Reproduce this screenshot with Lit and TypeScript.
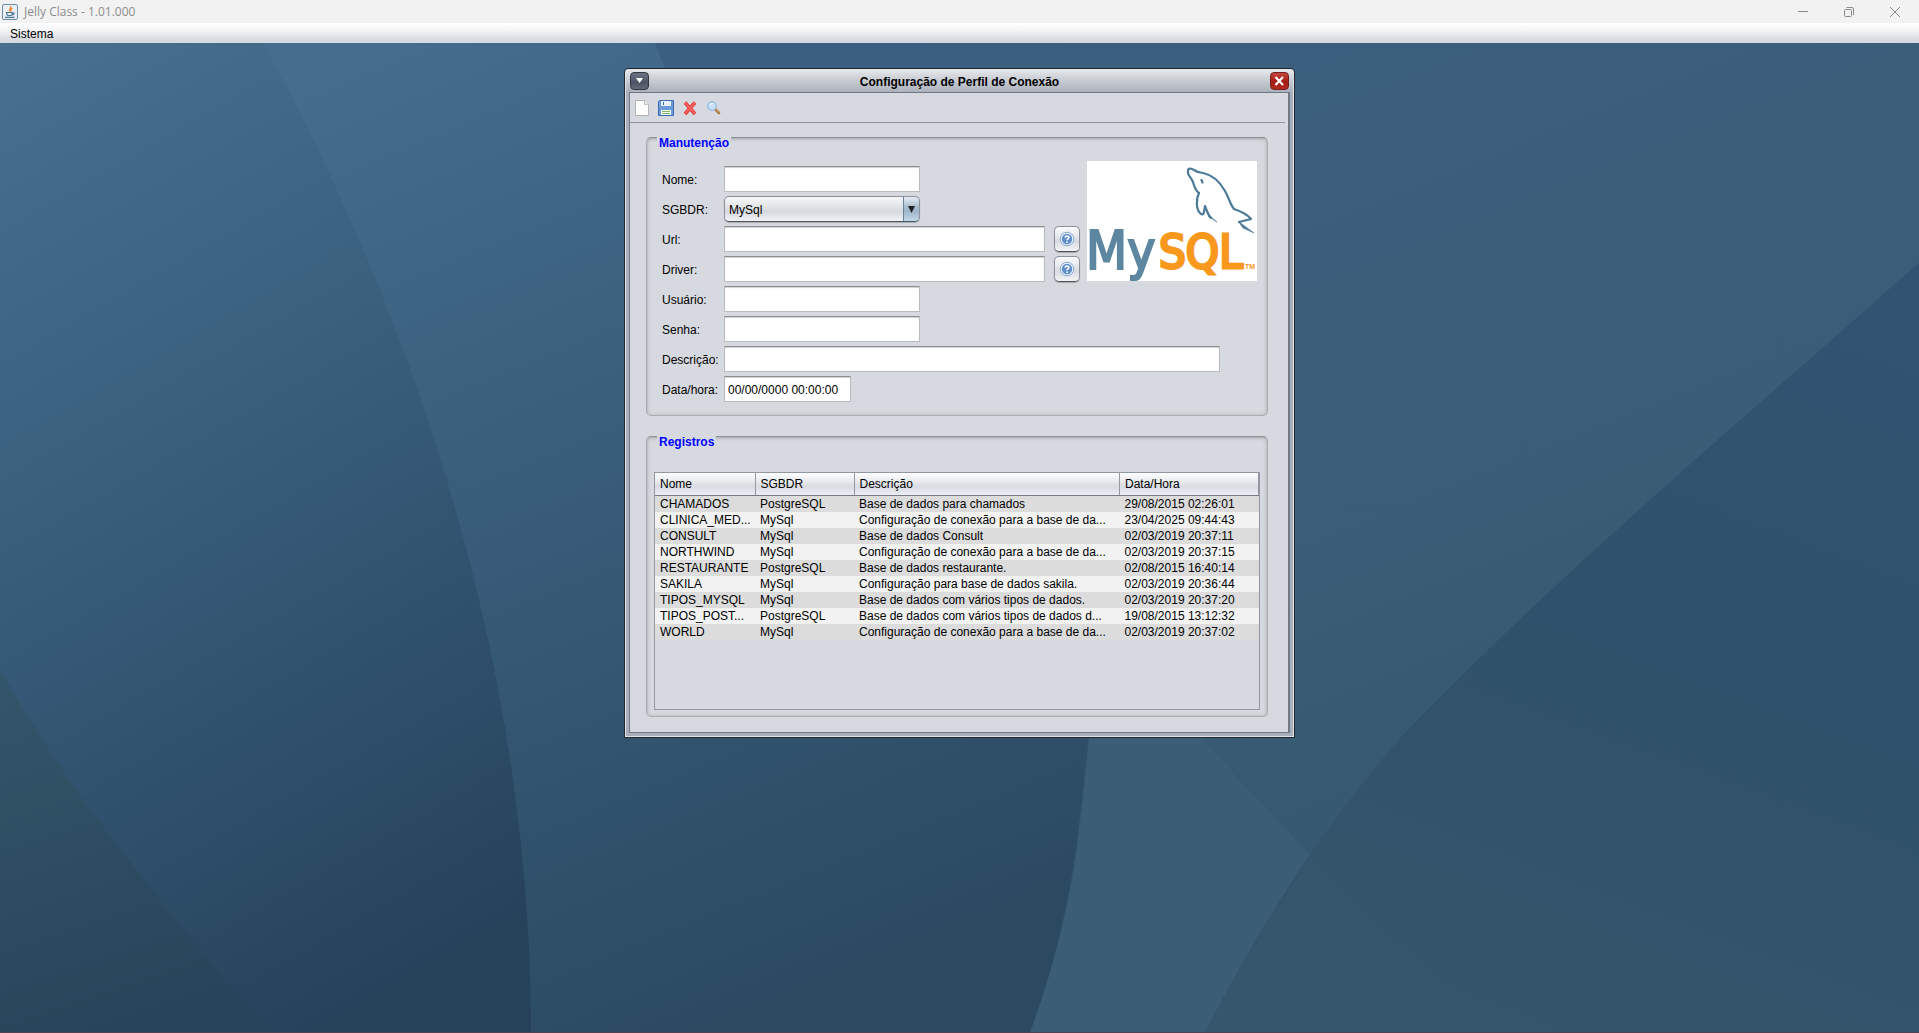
import { LitElement, html, css, svg } from "lit";
import { customElement } from "lit/decorators.js";

interface Registro {
  nome: string;
  sgbdr: string;
  descricao: string;
  data: string;
}

const registros: Registro[] = [
  { nome: "CHAMADOS", sgbdr: "PostgreSQL", descricao: "Base de dados para chamados", data: "29/08/2015 02:26:01" },
  { nome: "CLINICA_MED...", sgbdr: "MySql", descricao: "Configuração de conexão para a base de da...", data: "23/04/2025 09:44:43" },
  { nome: "CONSULT", sgbdr: "MySql", descricao: "Base de dados Consult", data: "02/03/2019 20:37:11" },
  { nome: "NORTHWIND", sgbdr: "MySql", descricao: "Configuração de conexão para a base de da...", data: "02/03/2019 20:37:15" },
  { nome: "RESTAURANTE", sgbdr: "PostgreSQL", descricao: "Base de dados restaurante.", data: "02/08/2015 16:40:14" },
  { nome: "SAKILA", sgbdr: "MySql", descricao: "Configuração para base de dados sakila.", data: "02/03/2019 20:36:44" },
  { nome: "TIPOS_MYSQL", sgbdr: "MySql", descricao: "Base de dados com vários tipos de dados.", data: "02/03/2019 20:37:20" },
  { nome: "TIPOS_POST...", sgbdr: "PostgreSQL", descricao: "Base de dados com vários tipos de dados d...", data: "19/08/2015 13:12:32" },
  { nome: "WORLD", sgbdr: "MySql", descricao: "Configuração de conexão para a base de da...", data: "02/03/2019 20:37:02" },
];

const wallpaper = svg`
  <defs>
    <linearGradient id="left" gradientUnits="userSpaceOnUse" x1="0" y1="0" x2="520" y2="900">
      <stop offset="0" stop-color="#48718f"/><stop offset=".45" stop-color="#375d7b"/><stop offset="1" stop-color="#26415a"/>
    </linearGradient>
    <linearGradient id="corner" gradientUnits="userSpaceOnUse" x1="0" y1="630" x2="120" y2="990">
      <stop offset="0" stop-color="#34566a"/><stop offset="1" stop-color="#28445a"/>
    </linearGradient>
    <linearGradient id="mid" gradientUnits="userSpaceOnUse" x1="350" y1="0" x2="760" y2="990">
      <stop offset="0" stop-color="#456d8e"/><stop offset=".5" stop-color="#375b78"/><stop offset="1" stop-color="#2b4961"/>
    </linearGradient>
    <linearGradient id="base" gradientUnits="userSpaceOnUse" x1="900" y1="0" x2="1300" y2="990">
      <stop offset="0" stop-color="#3b5f80"/><stop offset=".6" stop-color="#3a5e77"/><stop offset="1" stop-color="#34556d"/>
    </linearGradient>
    <linearGradient id="right" gradientUnits="userSpaceOnUse" x1="1800" y1="200" x2="1500" y2="990">
      <stop offset="0" stop-color="#315473"/><stop offset=".5" stop-color="#30516b"/><stop offset="1" stop-color="#35556c"/>
    </linearGradient>
  </defs>
  <rect width="1919" height="990" fill="url(#base)"/>
  <path d="M1200 695L1310 813L1487 990H1030C1060 910 1080 830 1089 695Z" fill="#3b5d76"/>
  <path d="M1919 220C1750 370 1560 530 1407 688C1330 775 1270 865 1205 990H1919Z" fill="url(#right)"/>
  <path d="M1310 816C1275 870 1240 925 1205 990H1487Z" fill="#36566e"/>
  <path d="M263 0H655C700 140 900 300 1060 480C1110 560 1090 690 1077 801C1067 875 1050 935 1030 990H531Z" fill="url(#mid)"/>
  <path d="M0 0H263C400 250 531 600 531 990H0Z" fill="url(#left)"/>
  <path d="M0 627C80 770 180 880 269 990H0Z" fill="url(#corner)"/>
`;

const javaIcon = html`<svg class="java" viewBox="0 0 16 16" aria-hidden="true">
  <rect x=".5" y=".5" width="15" height="15" rx="1.5" fill="#e9eff4" stroke="#6c8ba5"/>
  <path d="M8.8 2C9.6 4 6.3 4.800 7.600 7.500M10.300 4.200C8.600 5 8.500 6 9 7.600" fill="none" stroke="#e8892f" stroke-width="1.300"/>
  <path d="M4.500 8.500H10.500C10.300 10.500 9.600 11.500 9 11.500H6.200C5.200 11.500 4.600 10 4.500 8.500ZM10.500 9H12C12.400 10 11.400 10.800 10 10.800M3 13.300H12.500" fill="none" stroke="#4d7897" stroke-width="1.200"/>
</svg>`;

const helpIcon = html`<svg class="help-icon" viewBox="0 0 16 16" aria-hidden="true">
  <circle cx="8" cy="8" r="6.800" fill="#eaf1fa" stroke="#86abd6" stroke-width="1"/>
  <circle cx="8" cy="8" r="5.200" fill="#5f8dca"/>
  <path d="M6.100 6.700C6.100 4.400 9.900 4.400 9.900 6.600C9.900 8 8 7.900 8 9.300" fill="none" stroke="#fff" stroke-width="1.500"/>
  <circle cx="8" cy="11.200" r=".9" fill="#fff"/>
</svg>`;

@customElement("app-root")
export class AppRoot extends LitElement {
  static styles = css`
    :host {
      display: flex;
      flex-direction: column;
      min-height: 100vh;
      font: 12px/16px "Liberation Sans", Arial, sans-serif;
      color: #000;
    }
    * { box-sizing: border-box; }
    button, input, select { font: inherit; color: inherit; margin: 0; }
    button { padding: 0; border: 0; background: none; }
    svg { display: block; }
    .titlebar {
      display: flex;
      align-items: center;
      height: 23px;
      padding: 0 18px 0 2px;
      gap: 6px;
      background: #f2f2f2;
      color: #8c8c8c;
      font-family: "Open Sans", "Noto Sans", sans-serif;
    }
    .java { width: 16px; height: 16px; }
    .caption { flex: 1; margin: 0; font: inherit; }
    .window-controls { display: flex; gap: 34px; }
    .window-controls svg { width: 12px; height: 12px; fill: none; stroke: #8a8a8a; }
    .menubar {
      height: 20px;
      padding: 2px 10px 0;
      background: linear-gradient(#fff, #f4f5f7 35%, #d9dbe1 80%, #d6d9df);
    }
    .menubar button { display: block; height: 18px; }
    .desktop {
      position: relative;
      flex: 1;
      display: flex;
      justify-content: center;
      align-items: flex-start;
      padding: 25px 0;
      border-bottom: 1px solid #4d4152;
    }
    .wallpaper { position: absolute; inset: 0; width: 100%; height: 100%; }
    .frame {
      position: relative;
      width: 671px;
      border: 1px solid #23282e;
      border-radius: 4px 4px 1px 1px;
      padding: 0 4px 4px;
      background: linear-gradient(#e9ebee, #d0d3d9 8px, #a9afba 24px, #a9afba);
      box-shadow: inset 0 0 0 1px #dfe2e8;
    }
    .frame-title {
      display: grid;
      grid-template-columns: 19px 1fr 19px;
      align-items: center;
      height: 23px;
      padding: 0 1px;
    }
    .frame-title h2 { margin: 0; padding-top: 2px; font: inherit; font-weight: bold; text-align: center; }
    .frame-button { width: 19px; height: 18px; border-radius: 4px; }
    .frame-button svg { width: 19px; height: 18px; margin: -1px; }
    .frame-menu { background: linear-gradient(#6e7583, #4c5364 60%, #636b7b); border: 1px solid #303642; }
    .frame-close { background: linear-gradient(#c4473f, #a51c14 55%, #b32c20); border: 1px solid #731e1c; }
    .content { border: 1px solid #707785; border-right-width: 2px; background: #d6d9df; padding: 0 0 15px; }
    .toolbar {
      display: flex;
      align-items: center;
      gap: 8px;
      height: 30px;
      margin-right: 3px;
      padding-left: 4px;
      border-bottom: 1px solid #8f949f;
    }
    .toolbar svg { width: 16px; height: 16px; }
    .group {
      position: relative;
      width: 622px;
      margin: 14px 0 0 16px;
      border: 1px solid #a9acb0;
      border-top-color: #8e9196;
      border-radius: 5px;
      box-shadow: inset 0 1px 3px #a5a8ad, inset 0 0 5px #c3c6c9;
    }
    .group + .group { margin-top: 20px; }
    .group h3 {
      position: absolute;
      top: -3px;
      left: 10px;
      margin: 0;
      padding: 0 2px;
      background: #d6d9df;
      color: #00f;
      font: inherit;
      font-weight: bold;
    }
    .form { display: flex; padding: 23px 10px 13px 15px; }
    .fields {
      display: grid;
      flex: none;
      grid-template-columns: 62px minmax(0, 1fr);
      grid-auto-rows: 26px;
      row-gap: 4px;
      width: 418px;
      margin: 5px 7px 0 0;
      align-items: center;
    }
    .fields label { padding-top: 2px; }
    .field { display: flex; justify-content: space-between; height: 26px; }
    .text {
      height: 26px;
      padding: 1px 3px 0;
      border: 1px solid #b8bbbf;
      border-top-color: #8d8e90;
      border-radius: 0;
      outline: 0;
      background: #fff;
      box-shadow: inset 0 1px 1px #cfd0d2;
    }
    .medium { width: 196px; }
    .wide { width: 321px; }
    .full { width: 496px; }
    .date { width: 127px; }
    .combo { position: relative; display: block; width: 196px; height: 26px; }
    .combo select {
      appearance: none;
      width: 196px;
      height: 26px;
      padding: 1px 24px 0 4px;
      border: 1px solid #8b919b;
      border-bottom-color: #4c5662;
      border-radius: 5px;
      background: linear-gradient(90deg, transparent 178px, #6b8298 178px, #6b8298 179px, transparent 179px),
        linear-gradient(#e6eef5, #a5bbce 45%, #9fb6ca 60%, #c3d8e8) right / 16px 100% no-repeat,
        linear-gradient(#f7f7f9, #e2e4e8 40%, #d5d8de 60%, #f0f2f6);
      box-shadow: 0 1px 1px #a8abb1;
    }
    .combo svg { position: absolute; right: 5px; top: 10px; width: 7px; height: 7px; pointer-events: none; }
    .help {
      display: grid;
      place-items: center;
      width: 26px;
      height: 26px;
      border: 1px solid #8b919b;
      border-bottom-color: #4c5157;
      border-radius: 5px;
      background: linear-gradient(#fbfbfc, #e2e4e8 45%, #d8dbe0 60%, #f3f4f7);
      box-shadow: 0 1px 1px #a8abb1;
    }
    .help-icon { width: 16px; height: 16px; }
    .logo { width: 170px; height: 120px; flex: none; }
    .records { padding: 35px 7px 6px; }
    .scroller { height: 238px; border: 1px solid #9297a1; }
    table { width: 100%; border-collapse: collapse; table-layout: fixed; }
    th, td { padding: 0 0 0 5px; font-weight: normal; text-align: left; white-space: nowrap; overflow: hidden; }
    th {
      height: 22px;
      border-right: 1px solid #9297a1;
      border-bottom: 1px solid #747a86;
      background: linear-gradient(#fdfdfe, #e4e6ea 45%, #d8dbe1 60%, #eceef4);
    }
    td { height: 16px; line-height: 16px; }
    tbody tr { background: #f2f2f2; }
    tbody tr:nth-child(odd) { background: #dcdcdc; }
    .c-nome { width: 100px; }
    .c-sgbdr { width: 99px; }
    .c-data { width: 139px; }
  `;

  render() {
    return html`
      <header class="titlebar">
        ${javaIcon}
        <h1 class="caption">Jelly Class - 1.01.000</h1>
        <div class="window-controls">
          <button aria-label="Minimizar"><svg viewBox="0 0 12 12"><path d="M1 5.500H11"/></svg></button>
          <button aria-label="Restaurar"><svg viewBox="0 0 12 12"><rect x="1.500" y="3.500" width="7" height="7" rx="1"/><path d="M3.500 1.500H9Q10.500 1.500 10.500 3V9"/></svg></button>
          <button aria-label="Fechar"><svg viewBox="0 0 12 12"><path d="M1 1L11 11M11 1L1 11"/></svg></button>
        </div>
      </header>
      <nav class="menubar"><button>Sistema</button></nav>
      <main class="desktop">
        <svg class="wallpaper" viewBox="0 0 1919 990" preserveAspectRatio="none" aria-hidden="true">${wallpaper}</svg>
        <section class="frame" aria-labelledby="frame-title">
          <div class="frame-title">
            <button class="frame-button frame-menu" aria-label="Menu">
              <svg viewBox="0 0 19 18"><path d="M6 6H13L9.500 11Z" fill="#fff"/></svg>
            </button>
            <h2 id="frame-title">Configuração de Perfil de Conexão</h2>
            <button class="frame-button frame-close" aria-label="Fechar janela">
              <svg viewBox="0 0 19 18"><path d="M5.500 5L13 13M13 5L5.500 13" stroke="#fff" stroke-width="2.200"/></svg>
            </button>
          </div>
          <div class="content">
            <div class="toolbar">
              <button aria-label="Novo"><svg viewBox="0 0 16 16"><path d="M1.500 .5H10.500L14.500 4.500V15.500H1.500Z" fill="#fdfdfd" stroke="#b4b4b4"/><path d="M10.500 .5V4.500H14.500" fill="#eee" stroke="#c4c4c4"/></svg></button>
              <button aria-label="Salvar"><svg viewBox="0 0 16 16"><path d="M1.500 .5H15.500V15.500H.5V1.500Z" fill="#6c9ad8" stroke="#3d69b0"/><rect x="3" y="1" width="10" height="5" fill="#e8f0fa"/><rect x="5" y="2" width="1" height="3" fill="#3d69b0"/><rect x="3" y="10" width="10" height="5" fill="#f5faf2"/><path d="M4 11.500H12M4 13.500H12" stroke="#7fb866"/></svg></button>
              <button aria-label="Excluir"><svg viewBox="0 0 16 16"><path d="M3 2.500L13 14M13 2.500L3 14" stroke="#e23b3b" stroke-width="3.600"/><path d="M3 2.500L13 14M13 2.500L3 14" stroke="#ff6a62" stroke-width="1.600"/></svg></button>
              <button aria-label="Pesquisar"><svg viewBox="0 0 16 16"><path d="M9.500 9.500L13 13" stroke="#a9743a" stroke-width="2.500" stroke-linecap="round"/><path d="M10 9.500L13 12.500" stroke="#e0b06b" stroke-width="1"/><circle cx="6" cy="6" r="4.200" fill="#c9e2f8" stroke="#9dbfe3" stroke-width="1.500"/><path d="M4 5Q5 3 7 3.500" fill="none" stroke="#fff"/></svg></button>
            </div>
            <section class="group">
              <h3>Manutenção</h3>
              <form class="form">
                <div class="fields">
                  <label for="nome">Nome:</label><input id="nome" class="text medium" />
                  <label for="sgbdr">SGBDR:</label>
                  <span class="combo"><select id="sgbdr"><option>MySql</option><option>PostgreSQL</option></select><svg viewBox="0 0 8 8"><path d="M0 0H8L4 8Z" fill="#1d2228"/></svg></span>
                  <label for="url">Url:</label>
                  <div class="field"><input id="url" class="text wide" /><button type="button" class="help" aria-label="Ajuda sobre a url">${helpIcon}</button></div>
                  <label for="driver">Driver:</label>
                  <div class="field"><input id="driver" class="text wide" /><button type="button" class="help" aria-label="Ajuda sobre o driver">${helpIcon}</button></div>
                  <label for="usuario">Usuário:</label><input id="usuario" class="text medium" />
                  <label for="senha">Senha:</label><input id="senha" type="password" class="text medium" />
                  <label for="descricao">Descrição:</label><input id="descricao" class="text full" />
                  <label for="datahora">Data/hora:</label><input id="datahora" class="text date" value="00/00/0000 00:00:00" />
                </div>
                <svg class="logo" viewBox="0 0 170 120" role="img" aria-label="Logotipo MySQL">
                  <rect width="170" height="120" fill="#fff"/>
                  <g fill="none" stroke="#4b7b98" stroke-width="2.200" stroke-linejoin="round" stroke-linecap="round">
                    <path d="M112 32C109 30 107 25 106 21C104 16 100 14 101 10C101 7 104 7 107 9C110 11 113 12 116 12C126 14 133 21 138 30C142 37 143 43 147 48C153 50 160 53 164 58L152 61"/>
                    <path d="M112 32C109 38 109 48 113 52C117 56 117 51 118 45C120 50 121 54 124 57"/>
                    <path d="M114.500 19L115.500 21.500"/>
                  </g>
                  <path d="M123 55L130 61L121 55ZM151 60L167 72L156 67Z" fill="#4b7b98" stroke="#4b7b98" stroke-width=".6"/>
                  <text x="-1" y="108" font-family="DejaVu Sans Condensed, DejaVu Sans, sans-serif" font-size="53" fill="#5d87a1" stroke="#5d87a1" stroke-width="2">My</text>
                  <text x="72" y="107" font-family="DejaVu Sans Condensed, DejaVu Sans, sans-serif" font-size="47" fill="#f8981d" stroke="#f8981d" stroke-width="3">SQL</text>
                  <text x="158" y="108" font-family="Liberation Sans, sans-serif" font-weight="bold" font-size="7" fill="#f8981d">TM</text>
                </svg>
              </form>
            </section>
            <section class="group">
              <h3>Registros</h3>
              <div class="records">
                <div class="scroller">
                  <table>
                    <colgroup><col class="c-nome" /><col class="c-sgbdr" /><col /><col class="c-data" /></colgroup>
                    <thead><tr><th>Nome</th><th>SGBDR</th><th>Descrição</th><th>Data/Hora</th></tr></thead>
                    <tbody>
                      ${registros.map((r) => html`<tr><td>${r.nome}</td><td>${r.sgbdr}</td><td>${r.descricao}</td><td>${r.data}</td></tr>`)}
                    </tbody>
                  </table>
                </div>
              </div>
            </section>
          </div>
        </section>
      </main>
    `;
  }
}
